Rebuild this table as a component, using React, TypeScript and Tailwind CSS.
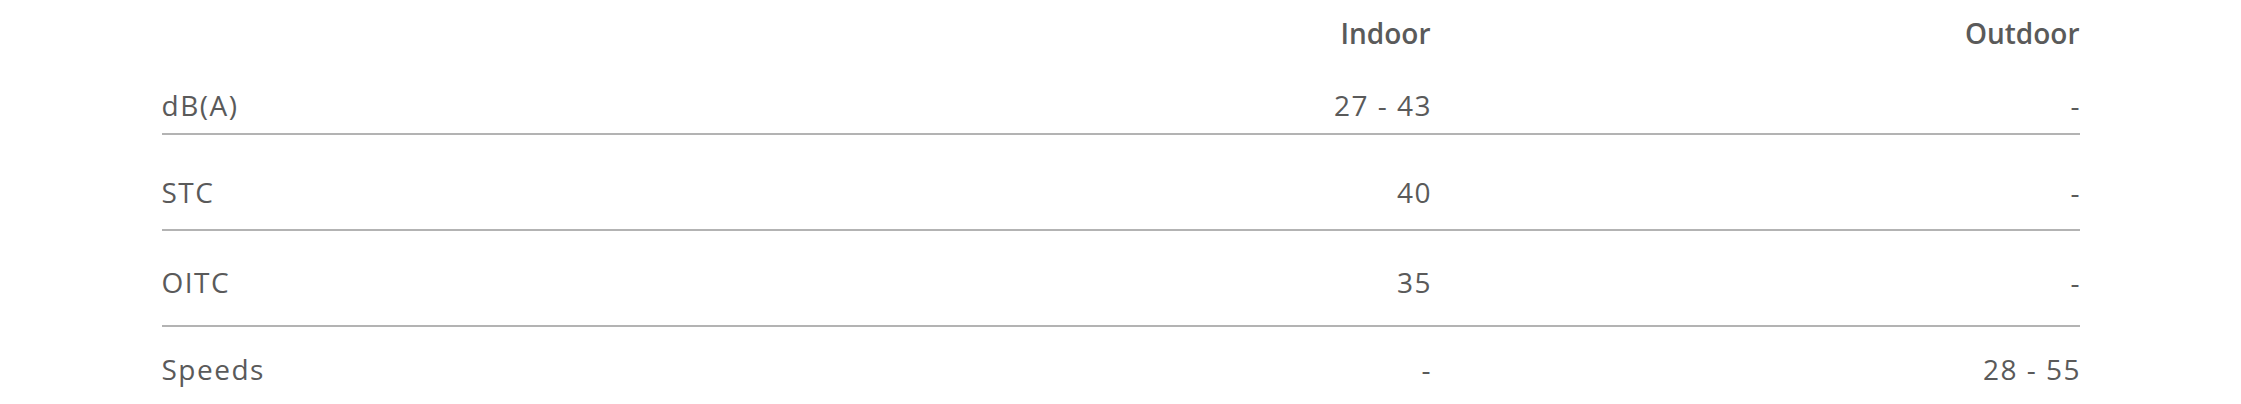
const rows = [
  { label: "dB(A)", indoor: "27 - 43", outdoor: "-", spacing: "pt-[25px] pb-[14px] border-b-2" },
  { label: "STC", indoor: "40", outdoor: "-", spacing: "pt-[43px] pb-[23px] border-b-2" },
  { label: "OITC", indoor: "35", outdoor: "-", spacing: "pt-[37px] pb-[29px] border-b-2" },
  { label: "Speeds", indoor: "-", outdoor: "28 - 55", spacing: "pt-[28px] pb-[22px]" },
];

function SpecTable() {
  return (
    <div className="mx-auto w-[1918px] text-[28px] leading-[28px] text-[#5a5a5a] font-['Open_Sans',sans-serif]">
      {/* column headings */}
      <div className="grid grid-cols-[620px_649px_649px] pt-[19px] pb-[19px] font-semibold">
        <div></div>
        <div className="text-right">Indoor</div>
        <div className="text-right">Outdoor</div>
      </div>

      {rows.map((row) => (
        <div
          key={row.label}
          className={`grid grid-cols-[620px_649px_649px] border-[#b3b3b3] font-normal tracking-[1.5px] ${row.spacing}`}
        >
          <div>{row.label}</div>
          <div className="text-right -mr-[1.5px]">{row.indoor}</div>
          <div className="text-right -mr-[1.5px]">{row.outdoor}</div>
        </div>
      ))}
    </div>
  );
}

export default function App() {
  return (
    <div className="min-h-[404px] w-full bg-white">
      <SpecTable />
    </div>
  );
}
